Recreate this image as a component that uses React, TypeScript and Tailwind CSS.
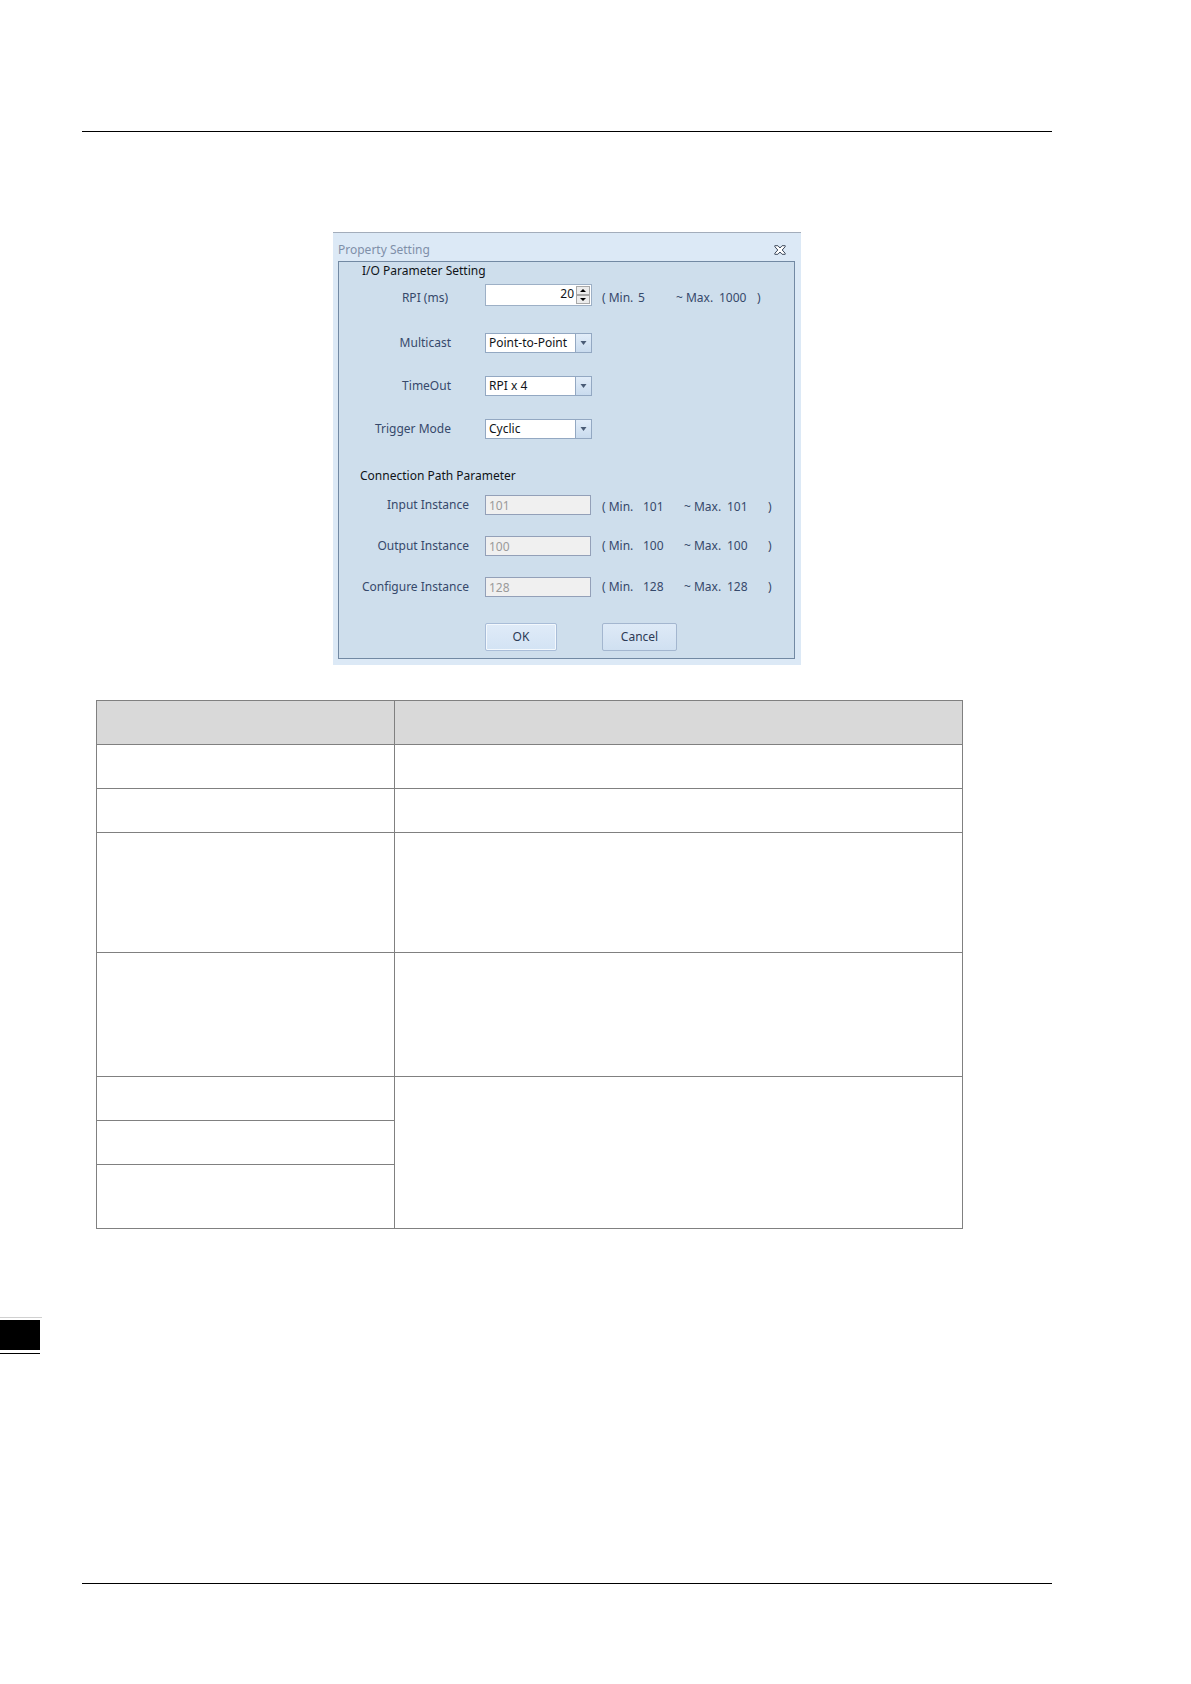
import React from "react";

type Range = { min: string; max: string };

function RangeNote({ min, max, wide = false }: Range & { wide?: boolean }) {
  return (
    <span
      className={
        wide
          ? "grid grid-cols-[36px_38px_43px_38px_auto]"
          : "grid grid-cols-[41px_41px_43px_41px_auto]"
      }
    >
      <span>( Min.</span>
      <span>{min}</span>
      <span>~ Max.</span>
      <span>{max}</span>
      <span>)</span>
    </span>
  );
}

function SelectRow({ id, label, options }: { id: string; label: string; options: string[] }) {
  return (
    <div className="grid grid-cols-[112px_1fr] items-center">
      <label htmlFor={id} className="text-right">
        {label}
      </label>
      <div className="relative ml-[34px] w-[107px]">
        <select
          id={id}
          className="block h-5 w-full appearance-none border border-[#93a8c2] bg-white pr-4 pl-[3px] text-[12px] leading-4 text-[#101418] outline-none"
        >
          {options.map((o) => (
            <option key={o}>{o}</option>
          ))}
        </select>
        <span className="pointer-events-none absolute inset-y-0 right-0 flex w-[17px] items-center justify-center border border-[#93a8c2] bg-linear-to-b from-[#e2edf9] to-[#c9dbee]">
          <svg width="7" height="4" viewBox="0 0 7 4" aria-hidden="true">
            <path d="M0.5 0h6L3.5 4z" fill="#4a5c76" />
          </svg>
        </span>
      </div>
    </div>
  );
}

function InstanceRow({
  id,
  label,
  value,
  low = false,
}: {
  id: string;
  label: string;
  value: string;
  low?: boolean;
}) {
  return (
    <div className="grid grid-cols-[130px_122px_1fr] items-center">
      <label htmlFor={id} className="text-right">
        {label}
      </label>
      <input
        id={id}
        disabled
        defaultValue={value}
        className="ml-4 h-5 w-[106px] border border-[#93a0b8] bg-[#f0f0f0] px-[3px] text-[12px] leading-4 text-[#9a9a9a]"
      />
      <div className={low ? "self-end pl-[11px]" : "pl-[11px]"}>
        <RangeNote min={value} max={value} />
      </div>
    </div>
  );
}

function PropertyDialog() {
  return (
    <section
      aria-label="Property Setting"
      className="mx-auto w-full max-w-[468px] border-t border-[#a3adbb] bg-[#dce9f6] pr-[6px] pb-[6px] pl-[5px] font-['Noto_Sans','Liberation_Sans',sans-serif] text-[12px] leading-4 text-[#36496b]"
    >
      <header className="flex h-7 items-center justify-between pt-[6px] pr-[9px]">
        <h1 className="text-[#7f8fa9]">Property Setting</h1>
        <button type="button" aria-label="Close">
          <svg width="12" height="10" viewBox="0 0 12 10" aria-hidden="true">
            <path
              d="M0.8 0.7H3.9L6 3L8.1 0.7H11.2V1.7L8.2 5L11.2 8.3V9.3H8.1L6 7L3.9 9.3H0.8V8.3L3.8 5L0.8 1.7Z"
              fill="#fff"
              stroke="#3e4a5c"
              strokeWidth="1"
            />
          </svg>
        </button>
      </header>
      <form
        className="border border-[#7289a3] bg-[#cedeec] pb-[7px]"
        onSubmit={(e) => e.preventDefault()}
      >
        <h2 className="pt-px pl-[23px] text-[#101418]">I/O Parameter Setting</h2>
        <div className="mt-[5px] grid grid-cols-[109px_144px_1fr] items-center">
          <label htmlFor="rpi" className="self-end text-right">
            RPI (ms)
          </label>
          <div className="ml-[37px] flex h-[22px] w-[107px] border border-[#9db0c6] bg-white p-px">
            <input
              id="rpi"
              defaultValue="20"
              className="min-w-0 flex-1 bg-transparent pr-[2px] pb-[2px] text-right text-[12px] leading-4 text-[#101418] outline-none"
            />
            <div className="flex w-[14px] flex-col">
              <button
                type="button"
                aria-label="Increase"
                className="flex flex-1 items-center justify-center border border-[#a8a8a8] bg-[#ececec]"
              >
                <svg width="6" height="3" viewBox="0 0 6 3" aria-hidden="true">
                  <path d="M0 3h6L3 0z" fill="#000" />
                </svg>
              </button>
              <button
                type="button"
                aria-label="Decrease"
                className="flex flex-1 items-center justify-center border border-[#a8a8a8] bg-[#ececec]"
              >
                <svg width="6" height="3" viewBox="0 0 6 3" aria-hidden="true">
                  <path d="M0 0h6L3 3z" fill="#000" />
                </svg>
              </button>
            </div>
          </div>
          <div className="self-end pl-[10px]">
            <RangeNote min="5" max="1000" wide />
          </div>
        </div>
        <div className="mt-[27px] grid gap-[23px]">
          <SelectRow id="multicast" label="Multicast" options={["Point-to-Point", "Multicast"]} />
          <SelectRow id="timeout" label="TimeOut" options={["RPI x 4", "RPI x 8", "RPI x 16"]} />
          <SelectRow id="trigger" label="Trigger Mode" options={["Cyclic", "Change of State"]} />
        </div>
        <h2 className="mt-[29px] pl-[21px] text-[#101418]">Connection Path Parameter</h2>
        <div className="mt-[11px] grid gap-[21px]">
          <InstanceRow id="input-instance" label="Input Instance" value="101" low />
          <InstanceRow id="output-instance" label="Output Instance" value="100" />
          <InstanceRow id="configure-instance" label="Configure Instance" value="128" />
        </div>
        <div className="mt-[26px] flex gap-[45px] pl-[146px]">
          <button
            type="submit"
            className="h-7 w-[72px] rounded-[2px] border border-[#a9bdd8] bg-linear-to-b from-[#e0ebf8] to-[#d3e3f4] text-[#2c3a55] shadow-[inset_0_0_0_1px_#f3f8fd]"
          >
            OK
          </button>
          <button
            type="button"
            className="h-7 w-[75px] rounded-[2px] border border-[#a3b6cf] bg-linear-to-b from-[#deeaf7] to-[#d0e0f1] text-[#2c3a55]"
          >
            Cancel
          </button>
        </div>
      </form>
    </section>
  );
}

function ParameterTable() {
  const cell = "border border-[#808080]";
  return (
    <table className="w-full table-fixed border-collapse">
      <colgroup>
        <col className="w-[298px]" />
        <col />
      </colgroup>
      <thead>
        <tr className="h-11 bg-[#d9d9d9]">
          <th className={cell} />
          <th className={cell} />
        </tr>
      </thead>
      <tbody>
        <tr className="h-11">
          <td className={cell} />
          <td className={cell} />
        </tr>
        <tr className="h-11">
          <td className={cell} />
          <td className={cell} />
        </tr>
        <tr className="h-[120px]">
          <td className={cell} />
          <td className={cell} />
        </tr>
        <tr className="h-[124px]">
          <td className={cell} />
          <td className={cell} />
        </tr>
        <tr className="h-11">
          <td className={cell} />
          <td className={cell} rowSpan={3} />
        </tr>
        <tr className="h-11">
          <td className={cell} />
        </tr>
        <tr className="h-16">
          <td className={cell} />
        </tr>
      </tbody>
    </table>
  );
}

export default function App() {
  return (
    <div className="flex min-h-screen bg-white">
      <aside className="w-[42px] shrink-0 pt-[1317px]">
        <div className="h-px bg-[#d0d0d0]" />
        <div className="mt-[2px] mr-[2px] h-[30px] bg-black" />
        <div className="mt-[3px] mr-[2px] h-px bg-black" />
      </aside>
      <main className="flex flex-1 flex-col pt-[131px] pr-[139px] pb-[100px] pl-10">
        <hr className="border-t border-black" />
        <div className="mt-[100px]">
          <PropertyDialog />
        </div>
        <div className="mt-[35px] mr-[89px] ml-[14px]">
          <ParameterTable />
        </div>
        <hr className="mt-auto border-t border-black" />
      </main>
    </div>
  );
}
